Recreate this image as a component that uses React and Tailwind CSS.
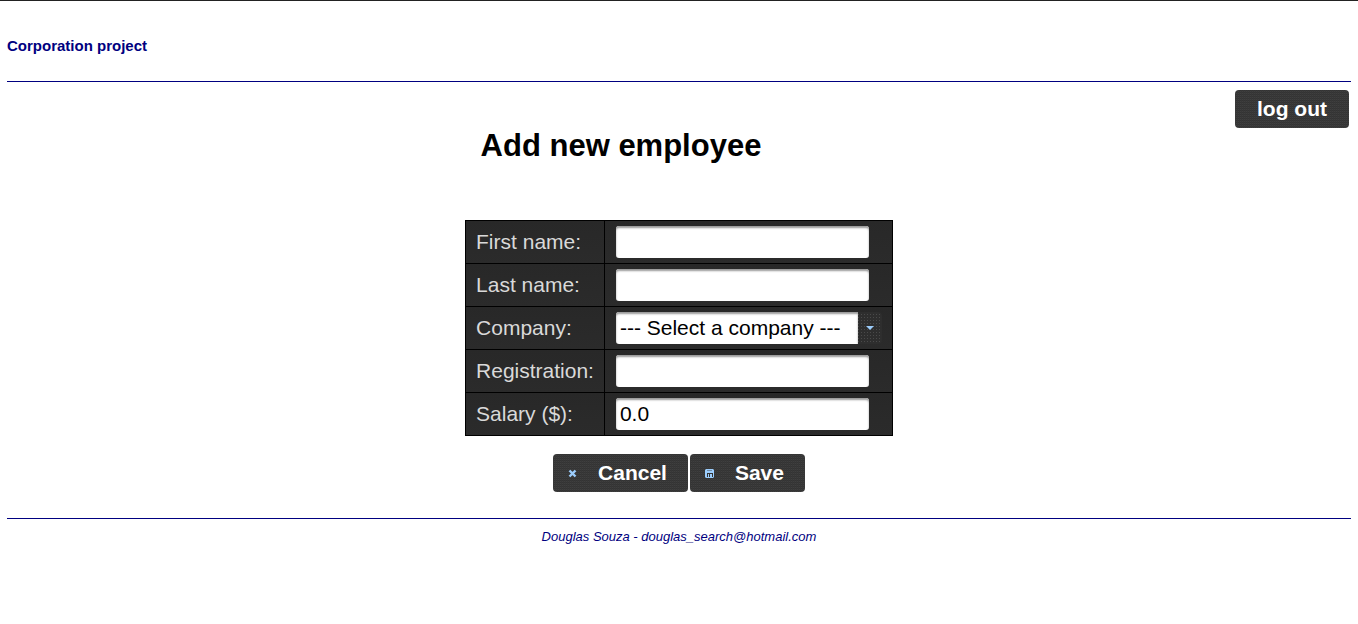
const texture =
  "bg-[#373737] bg-[linear-gradient(90deg,#373737_50%,transparent_50%),linear-gradient(#333333_50%,#3f3f3f_50%)] bg-[length:2px_2px]";

const fieldStyle =
  "block h-8 rounded-[3px] bg-white px-1 text-[21px] text-black shadow-[inset_0_2px_2px_#999999] outline-none";

const buttonStyle =
  "flex h-[38px] cursor-pointer items-center rounded text-[21px] font-bold text-white " + texture;

function CloseIcon() {
  return (
    <svg className="h-4 w-4" viewBox="0 0 16 16" fill="none" aria-hidden="true">
      <path d="M4.5 5.5 10.5 11.5M10.5 5.5 4.5 11.5" stroke="#9ccdfc" strokeWidth="2.4" />
    </svg>
  );
}

function DiskIcon() {
  return (
    <svg className="h-4 w-4" viewBox="0 0 16 16" aria-hidden="true">
      <path d="M4 4h7l1 1v7l-1 1H4l-1-1V5z" fill="#9ccdfc" />
      <path d="M5 5h5v1H5z" fill="#6d8ba8" />
      <path d="M5 8h6v1H5zM5 9h1v3H5zM7 9h1v3H7zM10 9h1v3h-1z" fill="#333333" />
    </svg>
  );
}

function Row({ label, id, children }) {
  return (
    <tr className="h-[43px] bg-linear-to-b from-[#282828] to-[#2b2b2b]">
      <td className="border border-black px-[10px] py-0">
        <label htmlFor={id}>{label}</label>
      </td>
      <td className="border border-black px-[10px] py-0">{children}</td>
    </tr>
  );
}

function TextField({ id, value }) {
  return <input id={id} name={id} type="text" defaultValue={value} className={"ml-px w-[253px] " + fieldStyle} />;
}

export default function App() {
  return (
    <div className="min-h-screen border-t border-[#222222] bg-white px-[7px] font-['Liberation_Sans',Arial,sans-serif] text-black">
      <header className="flex h-[81px] items-center border-b border-[#000080] pt-[10px]">
        <p className="text-[15px] font-bold text-[#000080]">Corporation project</p>
      </header>

      <main>
        <div className="flex items-start pt-2">
          <h1 className="flex-1 pt-9 text-center text-[31px] leading-10 font-bold">Add new employee</h1>
          <button type="button" className={"mr-[2px] px-[22px] " + buttonStyle}>
            log out
          </button>
        </div>

        <form className="flex flex-col items-center pt-[54px]" onSubmit={(event) => event.preventDefault()}>
          <table className="border-collapse text-[21px] leading-6 text-[#d9d9d9]">
            <tbody>
              <Row label="First name:" id="firstName">
                <TextField id="firstName" />
              </Row>
              <Row label="Last name:" id="lastName">
                <TextField id="lastName" />
              </Row>
              <Row label="Company:" id="company">
                <div className="relative ml-px w-[266px] rounded bg-[#2e2e2e] bg-[linear-gradient(90deg,#2e2e2e_67%,transparent_67%),linear-gradient(#2e2e2e_67%,#4a4a4a_67%)] bg-[length:3px_3px] pr-6">
                  <select
                    id="company"
                    name="company"
                    className={"w-full appearance-none rounded-r-none " + fieldStyle}
                  >
                    <option>--- Select a company ---</option>
                  </select>
                  <svg
                    className="pointer-events-none absolute top-2 right-1 h-4 w-4"
                    viewBox="0 0 16 16"
                    aria-hidden="true"
                  >
                    <path d="M4 6h8L8 10z" fill="#9ccdfc" />
                  </svg>
                </div>
              </Row>
              <Row label="Registration:" id="registration">
                <TextField id="registration" />
              </Row>
              <Row label="Salary ($):" id="salary">
                <TextField id="salary" value="0.0" />
              </Row>
            </tbody>
          </table>

          <div className="flex gap-[2px] pt-[18px]">
            <button type="button" className={"gap-[17px] pr-[21px] pl-3 " + buttonStyle}>
              <CloseIcon />
              Cancel
            </button>
            <button type="submit" className={"gap-[17px] pr-[21px] pl-3 " + buttonStyle}>
              <DiskIcon />
              Save
            </button>
          </div>
        </form>
      </main>

      <footer className="mt-[26px] border-t border-[#000080] pt-2 text-center text-[13px] leading-5 text-[#000080] italic">
        Douglas Souza - douglas_search@hotmail.com
      </footer>
    </div>
  );
}
